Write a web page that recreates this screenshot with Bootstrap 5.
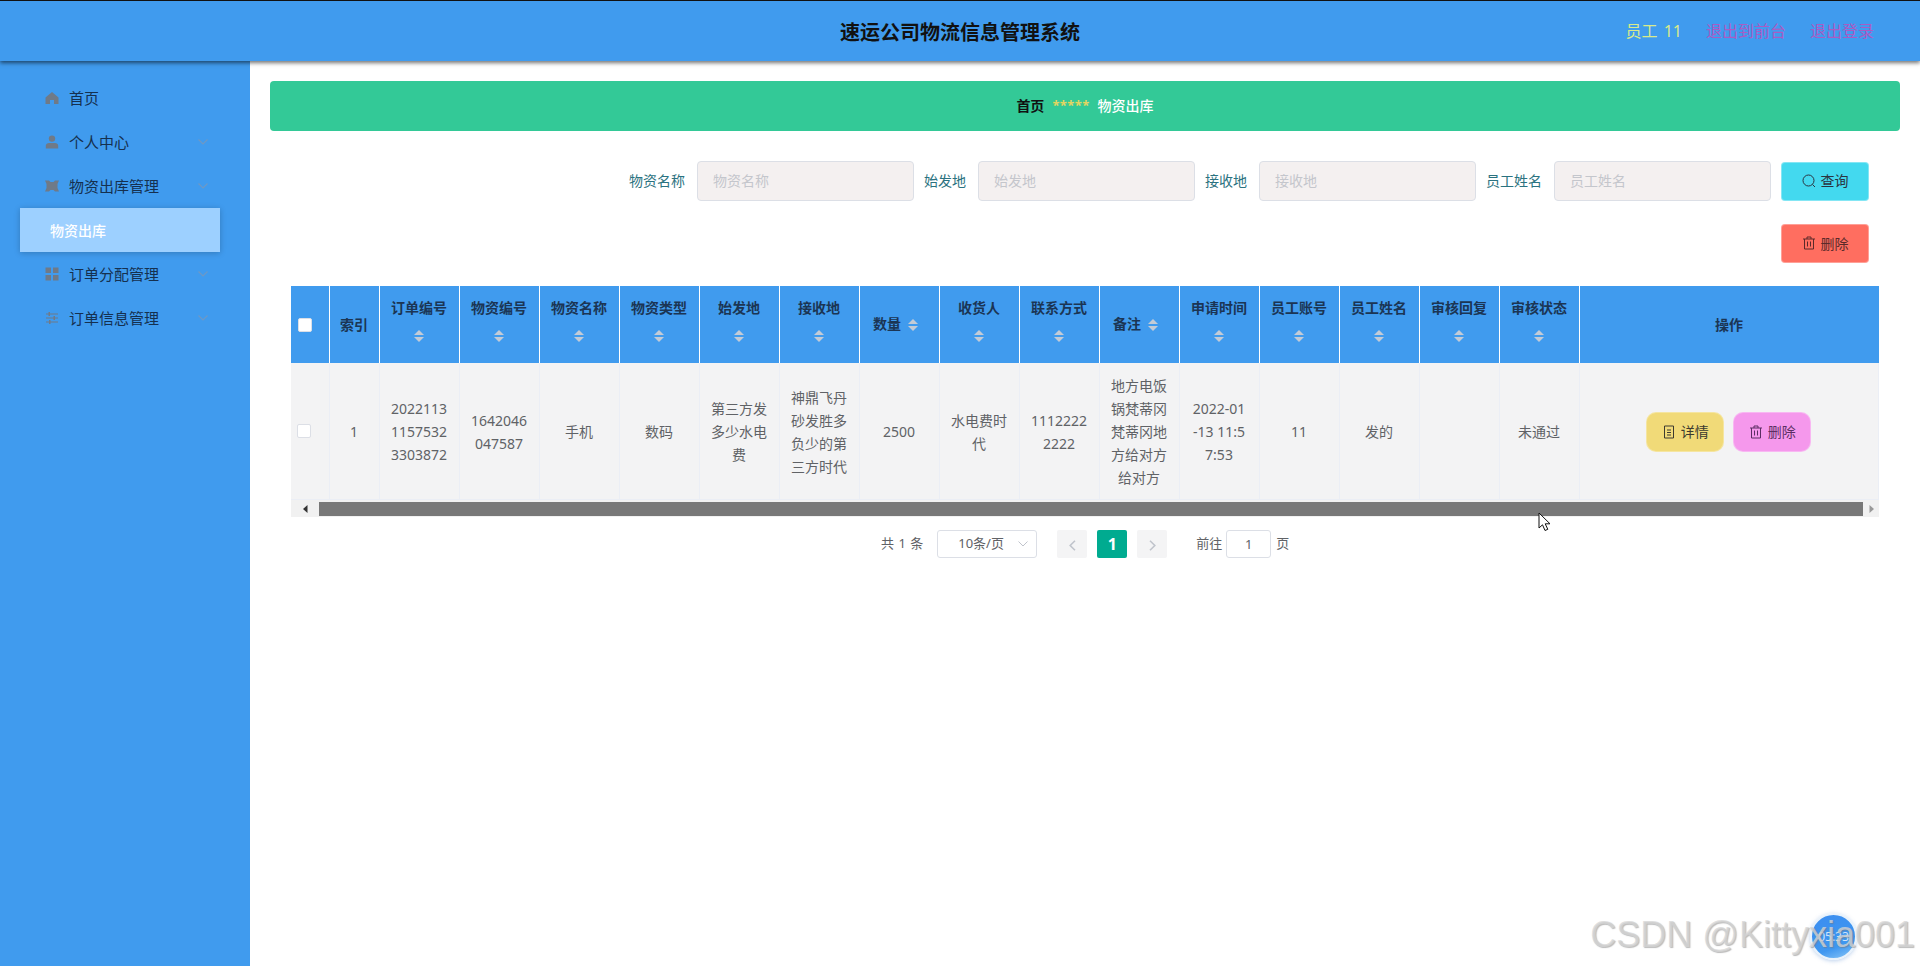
<!DOCTYPE html>
<html lang="zh-CN">
<head>
<meta charset="utf-8">
<title>速运公司物流信息管理系统</title>
<link href="https://cdn.jsdelivr.net/npm/bootstrap@5.3.0/dist/css/bootstrap.min.css" rel="stylesheet">
<style>
html,body{height:100%;overflow:hidden}
body{font-family:"Noto Sans","Noto Sans CJK SC",sans-serif;font-size:14px;color:#606266;background:#fff;border-top:1px solid #111}
.app-head{height:60px;background:#409bee;box-shadow:0 2px 4px rgba(0,0,0,.55);z-index:5}
.app-title{font-size:20px;font-weight:700;color:#111;line-height:1;left:0;right:0;top:22px;text-align:center}
.head-links{font-size:16px;line-height:24px;padding-right:46px;gap:24px}
.hl-user{color:#d8ea8c;word-spacing:2px}
.hl-link{color:#a95cc4;text-decoration:none}
.app-body{height:905px}
.app-side{width:250px;background:#409bee;padding-top:15px;flex:none}
.side-item{height:44px;padding-left:45px;padding-right:42px;font-size:15px;color:#15304f;gap:10px}
.side-item svg.ico{width:14px;height:14px;flex:none;fill:#6f7a88}
.side-item svg.chev{width:10px;height:6px;margin-left:auto;fill:none;stroke:#6f98c4;stroke-width:1.1}
.side-sub{height:44px;margin:0 30px 0 20px;padding-left:30px;background:#9dd0ff;color:#fff;font-size:14px;font-weight:500;box-shadow:0 1px 6px rgba(0,0,0,.22)}
.app-main{padding:20px 20px 0 20px;min-width:0}
.crumb{height:50px;background:#33c997;border-radius:4px;font-size:14px;font-weight:700;gap:8px;padding-bottom:2px}
.crumb-a{color:#111}
.crumb-b{color:#e3d560;font-size:13px;letter-spacing:.4px;font-weight:700;padding-top:1px}
.crumb-c{color:#fff;font-weight:500}
.filter-row{margin-top:30px;padding-right:31px;height:40px}
.f-label{color:#2b7280;margin-left:10px;margin-right:12px;white-space:nowrap;padding-bottom:1px}
.f-input{width:217px;height:40px;background:#f4f0f0;border:1px solid #dcdfe6;border-radius:4px;padding:0 15px 2px;font-size:14px;color:#606266;box-shadow:none}
.f-input::placeholder{color:#c4c6cc}
.f-input:focus{background:#f4f0f0;border-color:#dcdfe6;box-shadow:none}
.act-btn{height:39px;width:88px;border:1px solid rgba(255,255,255,.35);border-radius:4px;font-size:14px;color:#2b3440;gap:5px;padding:0 0 1px}
.btn-find{background:#43d9ef;margin-left:10px}
.btn-del{background:#ff6e60;color:#5a2a2a}
.btn-find:hover{background:#43d9ef}.btn-del:hover{background:#ff6e60}
.act-btn svg,.row-btn svg{width:14px;height:14px;fill:none;stroke:currentColor;stroke-width:1}
.del-row{margin-top:23px;padding-right:31px;height:39px}
.tbl-wrap{margin-top:23px;width:1588px;margin-left:21px}
.data-tbl{table-layout:fixed;width:1588px;margin:0;border-collapse:collapse;--bs-table-bg:transparent}
.data-tbl th{background:#409bee;color:#1b3554;font-weight:700;font-size:14px;line-height:23px;padding:10px;text-align:center;vertical-align:middle;border:0;border-right:1px solid #fff;word-break:break-all}
.data-tbl th:last-child{border-right:0}
.data-tbl td{background:#f3f3f4;color:#606266;font-size:14px;line-height:23px;padding:11px 10px 10px;height:136px;text-align:center;vertical-align:middle;border:0;border-right:1px solid #ebeef5;border-bottom:1px solid #ebeef5;word-break:break-all}
.data-tbl th.cbx{padding:0 0 0 7px;text-align:left}
.data-tbl td.cbx{padding:0 0 0 6px;text-align:left}
.data-tbl .cbx .form-check-input{width:14px;height:14px;margin:0;border-radius:2px;border:1px solid #dcdfe6;display:block;float:none}
.sort-wrap{display:inline-flex;flex-direction:column;align-items:center;justify-content:center;gap:2px;width:24px;height:34px;vertical-align:middle}
.sort-wrap i{display:block;width:0;height:0;border-left:5px solid transparent;border-right:5px solid transparent}
.sort-wrap i:first-child{border-bottom:5px solid #c3cbd6}
.sort-wrap i:last-child{border-top:5px solid #c3cbd6}
.row-btn{height:40px;border:1px solid rgba(255,255,255,.3);border-radius:10px;font-size:14px;color:#3c3a30;gap:5px;padding:0}
.btn-view{width:78px;background:#f1da78}.btn-rm{width:78px;background:#f598ec;color:#5b2f63;margin-left:9px}
.btn-view:hover{background:#f1da78}.btn-rm:hover{background:#f598ec}
.hscroll{height:17px;background:#f1f1f1;border:0;padding:2px 0 1px}
.sc-arrow{width:28px;flex:none}
.sc-thumb{flex:1;background:#787878}
.sc-end{width:16px;flex:none}
.pager{height:28px;margin-top:13px;font-size:13px;color:#606266;padding-left:611px;word-spacing:1px}
.pg-select{width:100px;height:28px;border:1px solid #dcdfe6;border-radius:3px;margin-left:14px;padding-left:20px;padding-right:8px;background:#fff}
.pg-select svg{width:10px;height:6px;margin-left:auto;fill:none;stroke:#c0c4cc;stroke-width:1}
.pg-btn{width:30px;height:28px;background:#f4f4f5;border:0;border-radius:2px;color:#c0c4cc;font-weight:700;margin-left:10px;padding:0}
.pg-btn svg{width:7px;height:11px;fill:none;stroke:currentColor;stroke-width:1.6}
.pg-first{margin-left:20px}
.pg-on{background:#00ab90;color:#fff}
.pg-jump{margin-left:29px}
.pg-input{width:45px;height:28px;border:1px solid #dcdfe6;border-radius:3px;margin:0 5px 0 4px;text-align:center;color:#606266;line-height:26px}
.wm{right:5px;top:914px;font-family:"Liberation Sans",sans-serif;font-size:36px;line-height:40px;color:rgba(214,214,214,.75);text-shadow:1px 1px 1px rgba(120,120,120,.5);white-space:nowrap;z-index:9;pointer-events:none}
.clock{left:1810px;top:912px;width:47px;height:47px;border-radius:50%;background:linear-gradient(160deg,#3b8df0 0%,#3f97f0 70%,#8cc8f7 100%);border:2px solid #e8f2fb;box-shadow:0 1px 4px rgba(60,120,200,.35);color:#cfe3fb;font-size:12px;z-index:8}
.cursor{left:1538px;top:511px;width:14px;height:20px;z-index:8}
</style>
</head>
<body class="position-relative">
<header class="app-head position-relative d-flex justify-content-end align-items-center">
  <div class="app-title position-absolute">速运公司物流信息管理系统</div>
  <div class="head-links d-flex position-relative">
    <span class="hl-user">员工 11</span>
    <a class="hl-link" href="#">退出到前台</a>
    <a class="hl-link" href="#">退出登录</a>
  </div>
</header>
<div class="app-body d-flex">
  <aside class="app-side">
    <div class="side-item d-flex align-items-center">
      <svg class="ico" viewBox="0 0 14 14"><path d="M7 1 13.500 6.500V13H9V9H5V13H.5V6.500Z"/></svg><span>首页</span>
    </div>
    <div class="side-item d-flex align-items-center">
      <svg class="ico" viewBox="0 0 14 14"><circle cx="7" cy="3.600" r="3.200"/><path d="M.8 13.500V10.800C.8 9 2.400 8 4 8H10C11.600 8 13.200 9 13.200 10.800V13.500Z"/></svg><span>个人中心</span>
      <svg class="chev" viewBox="0 0 10 6"><path d="M.5.5 5 5 9.500.500"/></svg>
    </div>
    <div class="side-item d-flex align-items-center">
      <svg class="ico" viewBox="0 0 14 14"><path d="M0 1.500H4L5.500 3H8.500L10 1.500H14L12.500 5V9L14 12.500H10L8.500 11H5.500L4 12.500H0L1.500 9V5Z"/></svg><span>物资出库管理</span>
      <svg class="chev" viewBox="0 0 10 6"><path d="M.5.5 5 5 9.500.500"/></svg>
    </div>
    <div class="side-sub d-flex align-items-center">物资出库</div>
    <div class="side-item d-flex align-items-center">
      <svg class="ico" viewBox="0 0 14 14"><path d="M.5.5H6V6H.5ZM8 .5H13.500V6H8ZM.5 8H6V13.500H.5ZM8 8H13.500V13.500H8Z"/></svg><span>订单分配管理</span>
      <svg class="chev" viewBox="0 0 10 6"><path d="M.5.5 5 5 9.500.500"/></svg>
    </div>
    <div class="side-item d-flex align-items-center">
      <svg class="ico" viewBox="0 0 14 14"><path d="M1 2.500H13V3.500H1ZM1 6.500H13V7.500H1ZM1 10.500H13V11.500H1ZM3.500 1H5V5H3.500ZM8.500 5H10V9H8.500ZM4 9H5.500V13H4Z"/></svg><span>订单信息管理</span>
      <svg class="chev" viewBox="0 0 10 6"><path d="M.5.5 5 5 9.500.500"/></svg>
    </div>
  </aside>
  <main class="app-main flex-grow-1">
    <div class="crumb d-flex justify-content-center align-items-center">
      <span class="crumb-a">首页</span><span class="crumb-b">*****</span><span class="crumb-c">物资出库</span>
    </div>
    <form class="filter-row d-flex justify-content-end align-items-center">
      <label class="f-label">物资名称</label><input class="form-control f-input" placeholder="物资名称">
      <label class="f-label">始发地</label><input class="form-control f-input" placeholder="始发地">
      <label class="f-label">接收地</label><input class="form-control f-input" placeholder="接收地">
      <label class="f-label">员工姓名</label><input class="form-control f-input" placeholder="员工姓名">
      <button type="button" class="btn act-btn btn-find d-flex align-items-center justify-content-center">
        <svg viewBox="0 0 14 14"><circle cx="6.500" cy="6.500" r="5.500"/><path d="M10.500 10.500 13 13"/></svg>查询
      </button>
    </form>
    <div class="del-row d-flex justify-content-end">
      <button type="button" class="btn act-btn btn-del d-flex align-items-center justify-content-center">
        <svg viewBox="0 0 14 14"><path d="M1 3H13M5 3V1H9V3M2.500 3V13H11.500V3M5.500 5.500V10.500M8.500 5.500V10.500"/></svg>删除
      </button>
    </div>
    <div class="tbl-wrap">
      <table class="table data-tbl">
        <colgroup>
          <col style="width:38px"><col style="width:50px">
          <col style="width:80px"><col style="width:80px"><col style="width:80px"><col style="width:80px"><col style="width:80px">
          <col style="width:80px"><col style="width:80px"><col style="width:80px"><col style="width:80px"><col style="width:80px">
          <col style="width:80px"><col style="width:80px"><col style="width:80px"><col style="width:80px"><col style="width:80px">
          <col>
        </colgroup>
        <thead>
          <tr>
            <th class="cbx"><input class="form-check-input" type="checkbox" aria-label="全选"></th>
            <th>索引</th>
            <th>订单编号<span class="sort-wrap"><i></i><i></i></span></th>
            <th>物资编号<span class="sort-wrap"><i></i><i></i></span></th>
            <th>物资名称<span class="sort-wrap"><i></i><i></i></span></th>
            <th>物资类型<span class="sort-wrap"><i></i><i></i></span></th>
            <th>始发地<span class="sort-wrap d-block mx-auto d-flex"><i></i><i></i></span></th>
            <th>接收地<span class="sort-wrap d-block mx-auto d-flex"><i></i><i></i></span></th>
            <th>数量<span class="sort-wrap"><i></i><i></i></span></th>
            <th>收货人<span class="sort-wrap d-block mx-auto d-flex"><i></i><i></i></span></th>
            <th>联系方式<span class="sort-wrap"><i></i><i></i></span></th>
            <th>备注<span class="sort-wrap"><i></i><i></i></span></th>
            <th>申请时间<span class="sort-wrap"><i></i><i></i></span></th>
            <th>员工账号<span class="sort-wrap"><i></i><i></i></span></th>
            <th>员工姓名<span class="sort-wrap"><i></i><i></i></span></th>
            <th>审核回复<span class="sort-wrap"><i></i><i></i></span></th>
            <th>审核状态<span class="sort-wrap"><i></i><i></i></span></th>
            <th>操作</th>
          </tr>
        </thead>
        <tbody>
          <tr>
            <td class="cbx"><input class="form-check-input" type="checkbox" aria-label="选择"></td>
            <td>1</td>
            <td>202211311575323303872</td>
            <td>1642046047587</td>
            <td>手机</td>
            <td>数码</td>
            <td>第三方发多少水电费</td>
            <td>神鼎飞丹砂发胜多负少的第三方时代</td>
            <td>2500</td>
            <td>水电费时代</td>
            <td>11122222222</td>
            <td>地方电饭锅梵蒂冈梵蒂冈地方给对方给对方</td>
            <td>2022-01<br>-13 11:5<br>7:53</td>
            <td>11</td>
            <td>发的</td>
            <td></td>
            <td>未通过</td>
            <td>
              <div class="d-flex justify-content-center">
                <button type="button" class="btn row-btn btn-view d-flex align-items-center justify-content-center">
                  <svg viewBox="0 0 14 14"><path d="M2.500 1H11.500V13H2.500ZM5 5H9M5 7.500H9M5 10H9"/></svg>详情
                </button>
                <button type="button" class="btn row-btn btn-rm d-flex align-items-center justify-content-center">
                  <svg viewBox="0 0 14 14"><path d="M1 3H13M5 3V1H9V3M2.500 3V13H11.500V3M5.500 5.500V10.500M8.500 5.500V10.500"/></svg>删除
                </button>
              </div>
            </td>
          </tr>
        </tbody>
      </table>
      <div class="hscroll d-flex">
        <div class="sc-arrow d-flex align-items-center justify-content-center"><svg width="5" height="8" viewBox="0 0 5 8"><path d="M4.500 0V8L0 4Z" fill="#333"/></svg></div>
        <div class="sc-thumb"></div>
        <div class="sc-end d-flex align-items-center justify-content-center"><svg width="5" height="8" viewBox="0 0 5 8"><path d="M.5 0V8L5 4Z" fill="#999"/></svg></div>
      </div>
    </div>
    <div class="pager d-flex align-items-center">
      <span>共 1 条</span>
      <div class="pg-select d-flex align-items-center"><span>10条/页</span><svg viewBox="0 0 10 6"><path d="M.5.5 5 5 9.500.500"/></svg></div>
      <button type="button" class="btn pg-btn pg-first"><svg viewBox="0 0 7 11"><path d="M6 .8 1.200 5.500 6 10.200"/></svg></button>
      <button type="button" class="btn pg-btn pg-on">1</button>
      <button type="button" class="btn pg-btn"><svg viewBox="0 0 7 11"><path d="M1 .8 5.800 5.500 1 10.200"/></svg></button>
      <span class="pg-jump">前往</span>
      <div class="pg-input">1</div>
      <span>页</span>
    </div>
  </main>
</div>
<div class="clock position-absolute d-flex align-items-center justify-content-center">05:33</div>
<div class="wm position-absolute">CSDN @Kittyxia001</div>
<svg class="cursor position-absolute" viewBox="0 0 14 20"><path d="M1 1V16L4.500 12.800 7 18.500 9.800 17.300 7.200 11.800H12Z" fill="#fff" stroke="#111" stroke-width="1"/></svg>
</body>
</html>
